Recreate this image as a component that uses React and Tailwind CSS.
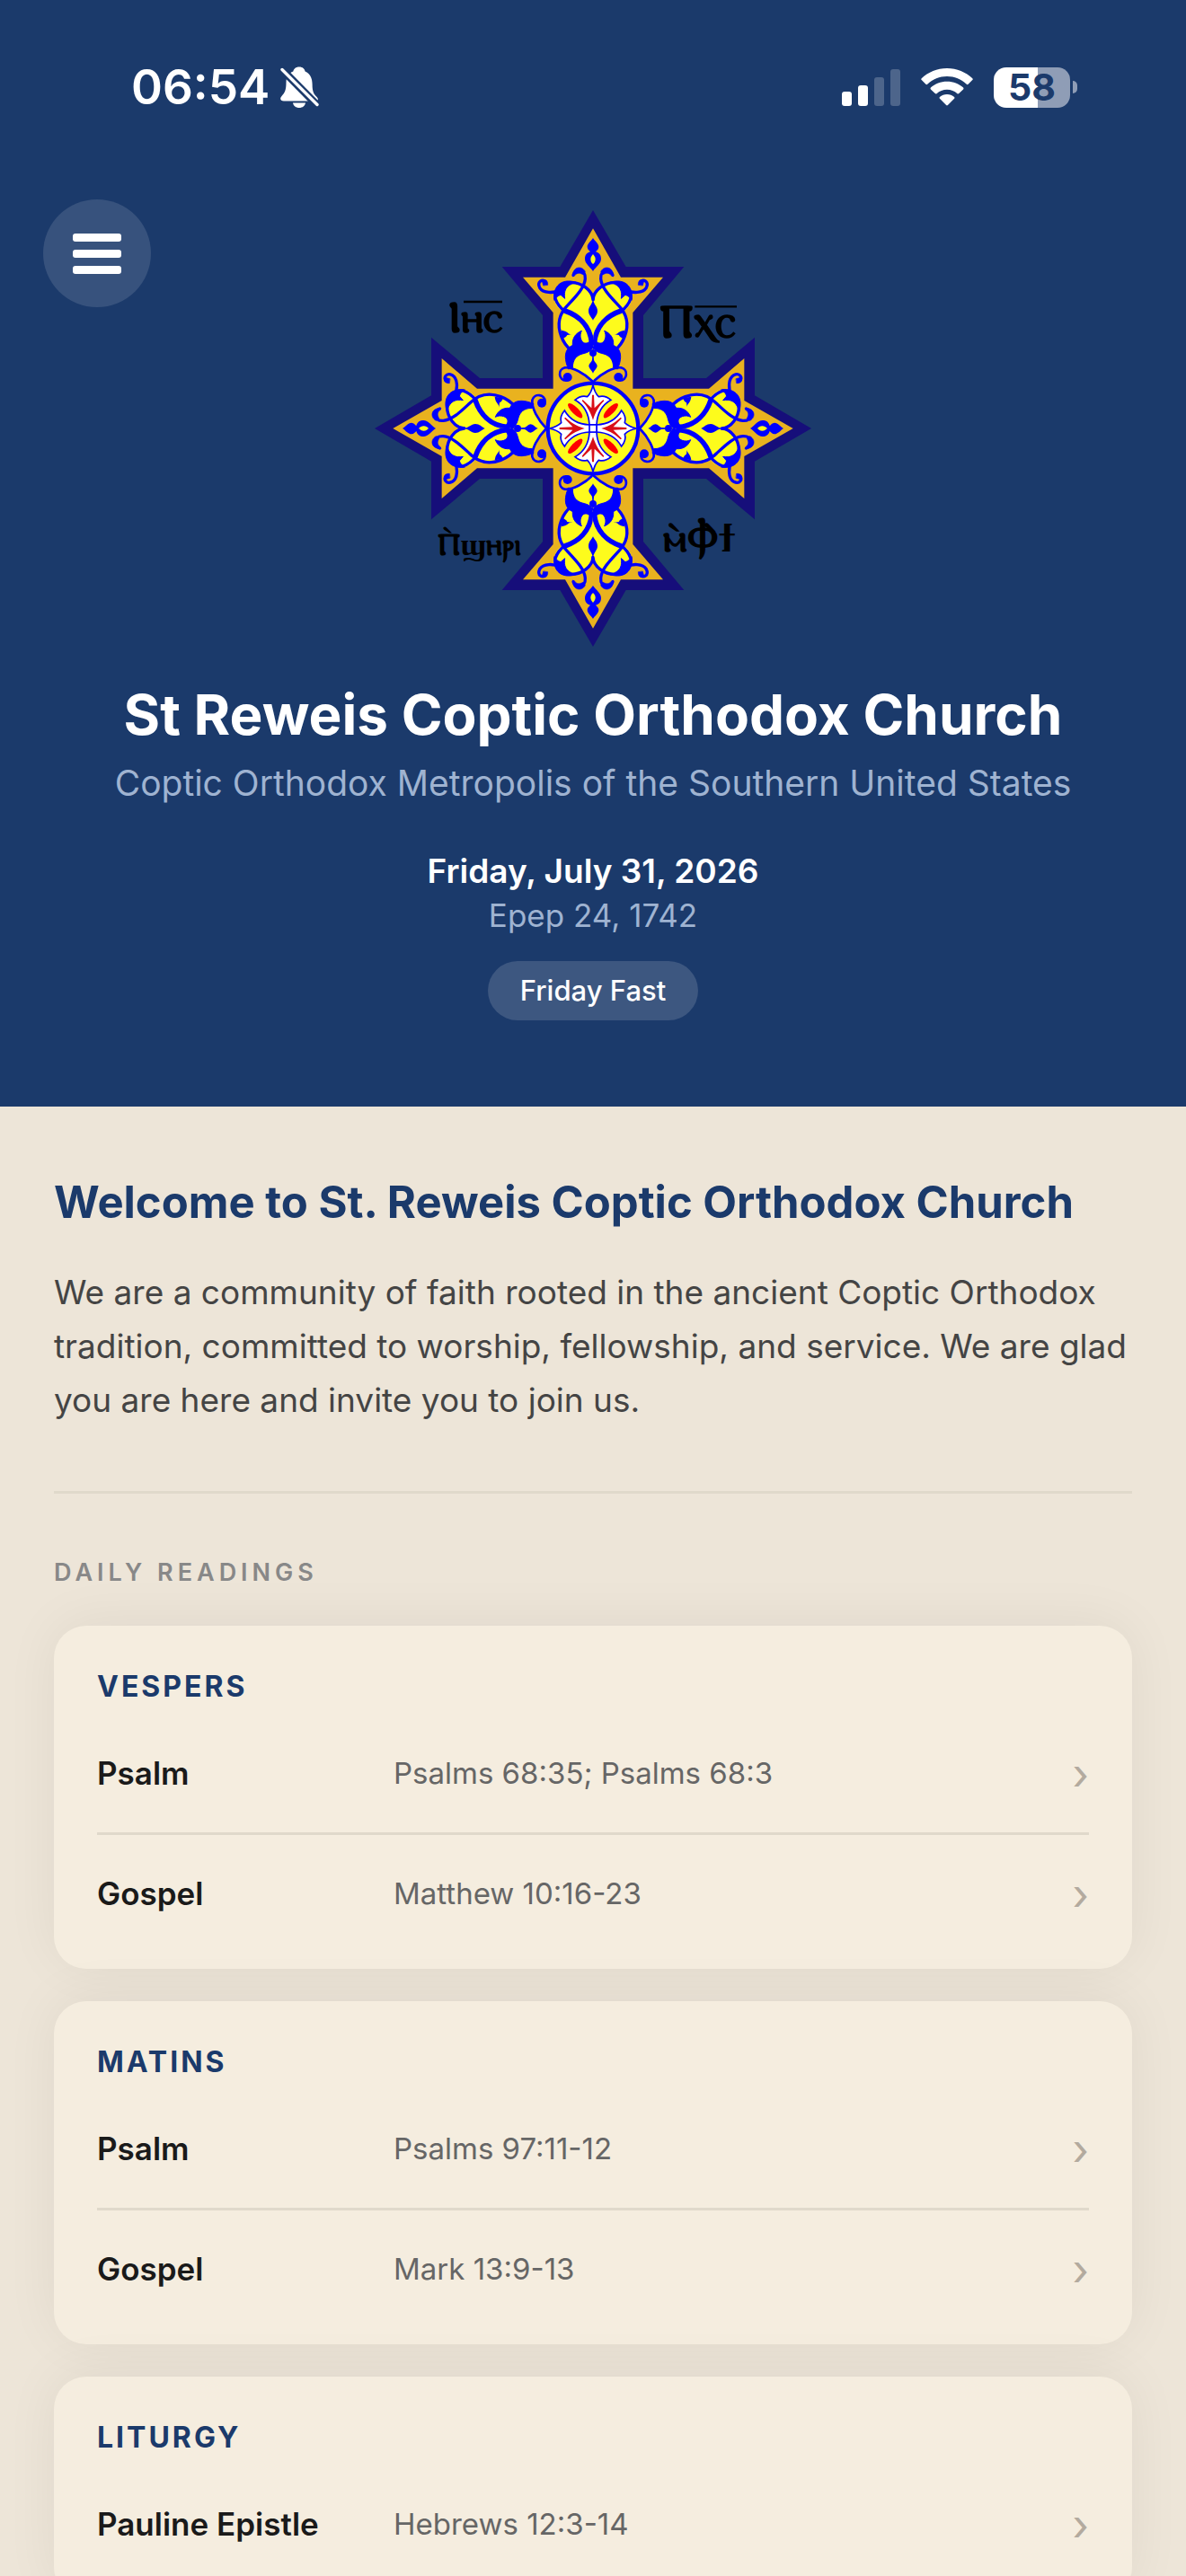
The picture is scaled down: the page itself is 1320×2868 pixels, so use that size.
const NAVY = "#160e7a";
const GOLD = "#e9b21f";
const BLUE = "#0000ff";
const YELLOW = "#fdfb1c";

const TURNS = [0, 90, 180, 270];

const SERVICES = [
  {
    name: "Vespers",
    readings: [
      { label: "Psalm", passage: "Psalms 68:35; Psalms 68:3" },
      { label: "Gospel", passage: "Matthew 10:16-23" },
    ],
  },
  {
    name: "Matins",
    readings: [
      { label: "Psalm", passage: "Psalms 97:11-12" },
      { label: "Gospel", passage: "Mark 13:9-13" },
    ],
  },
  {
    name: "Liturgy",
    readings: [{ label: "Pauline Epistle", passage: "Hebrews 12:3-14" }],
  },
];

function BellOff() {
  return (
    <svg viewBox="0 0 43 46" className="h-[46px] w-[43px]" aria-label="Silent mode">
      <path
        d="M21 0.5c4 0 6 2.2 6.6 5 5.4 2.4 8 7.5 8 14.5 0 8 1.6 10.500 5 14 2.600 3 1 4.400-2 4.400H4c-4 0-5-3-2.500-5.500C5 29.500 6.500 26 6.500 18c0-7 3-10.700 7.800-12.500C15 2.700 17 0.500 21 0.500z"
        fill="#fff"
      />
      <path d="M14 40.500h14c-0.500 3.300-3.300 5.500-7 5.500s-6.500-2.200-7-5.500z" fill="#fff" />
      <path d="M2 3.500L41 43" stroke="#1b3a6b" strokeWidth="8.500" />
      <path d="M2 3.500L41 42.500" stroke="#fff" strokeWidth="3.400" strokeLinecap="round" />
    </svg>
  );
}

function Signal() {
  return (
    <svg viewBox="0 0 65 41" className="h-[41px] w-[65px]" fill="#fff" aria-label="Signal, two of four bars">
      <rect x="0" y="25" width="11" height="16" rx="3" />
      <rect x="18" y="18" width="11" height="23" rx="3" />
      <rect x="36" y="9" width="11" height="32" rx="3" opacity="0.22" />
      <rect x="54" y="0" width="11" height="41" rx="3" opacity="0.22" />
    </svg>
  );
}

function Wifi() {
  return (
    <svg viewBox="0 0 58 42" className="h-[42px] w-[58px]" fill="#fff" aria-label="Wi-Fi">
      <path d="M29 0C40 0 50 4.300 57.300 11.300q0.900 0.900 0 1.800l-4.700 4.700q-0.900 0.800-1.800 0C44.800 12.300 37.300 9 29 9S13.200 12.300 7.200 17.800q-0.900 0.800-1.800 0L0.700 13.100q-0.900-0.900 0-1.800C8 4.300 18 0 29 0z" />
      <path d="M29 14.700c7 0 13.300 2.600 18.100 6.900q0.900 0.900 0 1.800l-4.800 4.700q-0.900 0.800-1.800 0.100C37.400 25.400 33.400 23.700 29 23.700s-8.400 1.700-11.500 4.500q-0.900 0.700-1.800-0.100l-4.800-4.700q-0.900-0.900 0-1.800C15.700 17.300 22 14.700 29 14.700z" />
      <path d="M29 29c3.100 0 5.900 1.100 8.100 3q0.900 0.900 0 1.800l-7.200 7.300q-0.900 0.900-1.800 0l-7.200-7.300q-0.900-0.900 0-1.800C23.100 30.100 25.900 29 29 29z" />
    </svg>
  );
}

function Battery() {
  return (
    <div className="flex items-center gap-[3px]">
      <div className="flex h-[45px] w-[85px] items-center justify-center rounded-[14px] bg-linear-to-r from-white from-58% to-[#8f9db6] to-58% text-[41px] leading-none font-bold text-[#1b3a6b]">
        58
      </div>
      <div className="h-[14px] w-[5px] rounded-r-full bg-[#8f9db6]" />
    </div>
  );
}

function StatusBar() {
  return (
    <div className="flex items-center justify-between pt-16 pr-[121px] pb-[92px] pl-[146px]">
      <div className="flex h-[66px] items-center gap-3">
        <span className="text-[53px] leading-none font-semibold">06:54</span>
        <BellOff />
      </div>
      <div className="flex items-center gap-[23px]">
        <Signal />
        <Wifi />
        <Battery />
      </div>
    </div>
  );
}

// Right half of the scrollwork in the top arm, origin at the centre of the cross.
function ScrollHalf() {
  return (
    <g fill="none" stroke={BLUE} strokeWidth="10" strokeLinecap="round">
      <path
        d="M-1-158C30-185 60-203 80-203C86-230 86-252 70-263C100-290 122-345 100-391C128-405 132-435 129-450C122-485 95-490 70-489C40-485 10-460-1-425z"
        fill={YELLOW}
        stroke="none"
      />
      {/* hook, then the long outer stem */}
      <path d="M66-512C60-534 24-536 26-500C28-470 58-440 84-412C114-382 120-345 106-308C98-286 86-272 74-262" />
      <path d="M67-508C70-540 38-546 26-524L34-514C46-522 56-518 60-512z" fill={BLUE} strokeWidth="2" />
      {/* inner lobe crossing it */}
      <path d="M0-430C2-462 38-487 72-487C112-487 128-458 126-434C118-410 106-400 94-391" />
      <path d="M94-393C50-378 10-345 4-285" strokeWidth="17" />
      <path d="M60-489C104-502 136-476 129-428C124-438 118-443 108-446L94-434C98-458 92-476 64-486z" fill={BLUE} strokeWidth="3" />
      <path d="M112-462C130-452 166-450 178-470C188-490 168-502 158-490" />
      <path d="M151-480C150-496 162-500 170-492L166-478z" fill={BLUE} strokeWidth="2" />
      <path d="M70-314C82-312 84-326 106-328L102-300C96-302 88-306 86-312z" fill={BLUE} stroke="none" />
      {/* palmette */}
      <path
        d="M-1-266L4-304C8-284 32-276 40-298C44-308 42-318 38-326C58-318 70-302 68-278L78-272C98-256 94-225 82-198L68-203C68-232 53-244 36-249C18-253 5-259-1-272z"
        fill={BLUE}
        strokeWidth="3"
      />
      <path d="M0-156C30-185 68-205 94-203C120-196 114-160 90-160" strokeWidth="8" />
      <circle cx="85" cy="-171" r="15" fill={BLUE} stroke="none" />
    </g>
  );
}

function Scrollwork() {
  return (
    <g>
      <ScrollHalf />
      <g transform="scale(-1 1)">
        <ScrollHalf />
      </g>
      <g fill={BLUE}>
        <path d="M0-636C6-626 19-618 19-606C19-598 12-594 9-590C22-586 27-578 27-566C27-550 10-540 0-525C-10-540-27-550-27-566C-27-578-22-586-9-590C-12-594-19-598-19-606C-19-618-6-626 0-636z" />
        <path d="M0-434C2-412 15-408 15-393C15-378 5-372 0-361C-5-372-15-378-15-393C-15-408-2-412 0-434z" />
        <circle cx="0" cy="-252" r="12" />
        <path d="M-2-245H2L3-228C6-220 14-216 14-209C14-200 4-194 0-184C-4-194-14-200-14-209C-14-216-6-220-3-228z" />
      </g>
      <path d="M0-582C5-576 8-572 8-565C8-558 5-554 0-549C-5-554-8-558-8-565C-8-572-5-576 0-582z" fill={YELLOW} />
    </g>
  );
}

function Petal() {
  return (
    <g>
      <path
        d="M-12 12V-12C-14-50-30-78-60-95C-46-107-32-110-19-106C-9-116-3-130 0-146C3-130 9-116 19-106C32-110 46-107 60-95C30-78 14-50 12-12V12z"
        fill="#fff"
        stroke={BLUE}
        strokeWidth="5"
      />
      <path d="M-3-112H3L5-68L34-96L37-92C22-76 10-60 0-28C-10-60-22-76-37-92L-34-96L-5-68z" fill="#d90f18" />
    </g>
  );
}

function CopticCross() {
  return (
    <svg viewBox="-729 -729 1458 1458" className="mt-3 w-full max-w-[486px]" role="img" aria-label="Coptic cross">
      {TURNS.map((turn) => (
        <path
          key={turn}
          transform={`rotate(${turn})`}
          d="M-168 0V-378L-304-540H-110L0-729L110-540H304L168-378V0z"
          fill={NAVY}
        />
      ))}
      {TURNS.map((turn) => (
        <path
          key={turn}
          transform={`rotate(${turn})`}
          d="M-133 0V-387L-234-505H-93L0-668L93-505H234L133-387V0z"
          fill={GOLD}
        />
      ))}
      {TURNS.map((turn) => (
        <g key={turn} transform={`rotate(${turn})`}>
          <Scrollwork />
        </g>
      ))}
      <circle r="151" fill={YELLOW} stroke={BLUE} strokeWidth="13" />
      {TURNS.map((turn) => (
        <g key={turn} transform={`rotate(${turn})`}>
          <Petal />
          <ellipse cx="84" cy="0" rx="33" ry="11" transform="rotate(-45)" fill="#ff0000" />
        </g>
      ))}
      <path d="M-12-12H12V12H-12z" fill="#fff" stroke={BLUE} strokeWidth="5" />

      <g fill="#000" fontFamily="'DejaVu Serif', 'Liberation Serif', serif" fontWeight="700">
        <text x="-482" y="-321" fontSize="148">Ⲓⲏⲥ</text>
        <text x="222" y="-307" fontSize="156">Ⲡⲭⲥ</text>
        <text x="-518" y="424" fontSize="104">Ⲡ̀ϣⲏⲣⲓ</text>
        <text x="234" y="412" fontSize="136">ⲙ̀Ⲫ̀ϯ</text>
      </g>
      <path d="M-432-423H-303M340-407H480" stroke="#000" strokeWidth="7" />
    </svg>
  );
}

function Header() {
  return (
    <header className="bg-[#1b3a6b] pb-24 text-white">
      <StatusBar />
      <div className="grid grid-cols-[120px_1fr_120px] items-start px-12">
        <button
          type="button"
          aria-label="Open menu"
          className="flex size-[120px] flex-col items-center justify-center gap-[9px] rounded-full bg-[#37527d]"
        >
          <span className="h-[9px] w-[54px] rounded-[3px] bg-white" />
          <span className="h-[9px] w-[54px] rounded-[3px] bg-white" />
          <span className="h-[9px] w-[54px] rounded-[3px] bg-white" />
        </button>
        <div className="flex justify-center">
          <CopticCross />
        </div>
      </div>
      <div className="flex flex-col items-center text-center">
        <h1 className="mt-9 text-[62px] leading-[80px] font-bold">St Reweis Coptic Orthodox Church</h1>
        <p className="mt-3 text-[39px] leading-[48px] text-[#9fb3d1]">
          Coptic Orthodox Metropolis of the Southern United States
        </p>
        <p className="mt-[50px] text-[37px] leading-[48px] font-semibold">Friday, July 31, 2026</p>
        <p className="mt-1 text-[35px] leading-[42px] text-[#9fb3d1]">Epep 24, 1742</p>
        <p className="mt-[30px] rounded-full bg-[#3d5780] px-9 text-[31px] leading-[66px] font-medium">Friday Fast</p>
      </div>
    </header>
  );
}

function ServiceCard({ service }) {
  return (
    <section className="rounded-[36px] bg-[#f5eddf] px-12 pt-12 pb-[18px] shadow-[0_-4px_60px_rgba(0,0,0,0.06)]">
      <h3 className="mb-3 text-[32px] leading-[39px] font-bold tracking-[3px] text-[#1b3a6b] uppercase">
        {service.name}
      </h3>
      <ul className="divide-y-[3px] divide-[#e0d9cb]">
        {service.readings.map((reading) => (
          <li key={reading.label}>
            <a href="#reading" className="flex h-[131px] items-center">
              <span className="w-[330px] text-[35px] font-semibold text-[#1a1a1a]">{reading.label}</span>
              <span className="flex-1 text-[33px] text-[#666]">{reading.passage}</span>
              <span className="text-[48px] leading-none text-[#b3aa9e]" aria-hidden="true">›</span>
            </a>
          </li>
        ))}
      </ul>
    </section>
  );
}

export default function App() {
  return (
    <div className="h-screen overflow-y-auto bg-[#ede5d8] font-['Inter',sans-serif] [scrollbar-width:none]">
      <Header />
      <main className="px-[60px] pt-[77px]">
        <h2 className="text-[49px] leading-[60px] font-bold text-[#1b3a6b]">
          Welcome to St. Reweis Coptic Orthodox Church
        </h2>
        <p className="mt-10 text-[37px] leading-[60px] text-[#444]">
          We are a community of faith rooted in the ancient Coptic Orthodox tradition, committed to worship, fellowship,
          and service. We are glad you are here and invite you to join us.
        </p>
        <hr className="mt-[71px] border-t-[3px] border-[#e0d9cb]" />
        <h2 className="mt-[70px] text-[27px] leading-[36px] font-semibold tracking-[5px] text-[#888] uppercase">
          Daily Readings
        </h2>
        <div className="mt-[41px] flex flex-col gap-9">
          {SERVICES.map((service) => (
            <ServiceCard key={service.name} service={service} />
          ))}
        </div>
      </main>
    </div>
  );
}
